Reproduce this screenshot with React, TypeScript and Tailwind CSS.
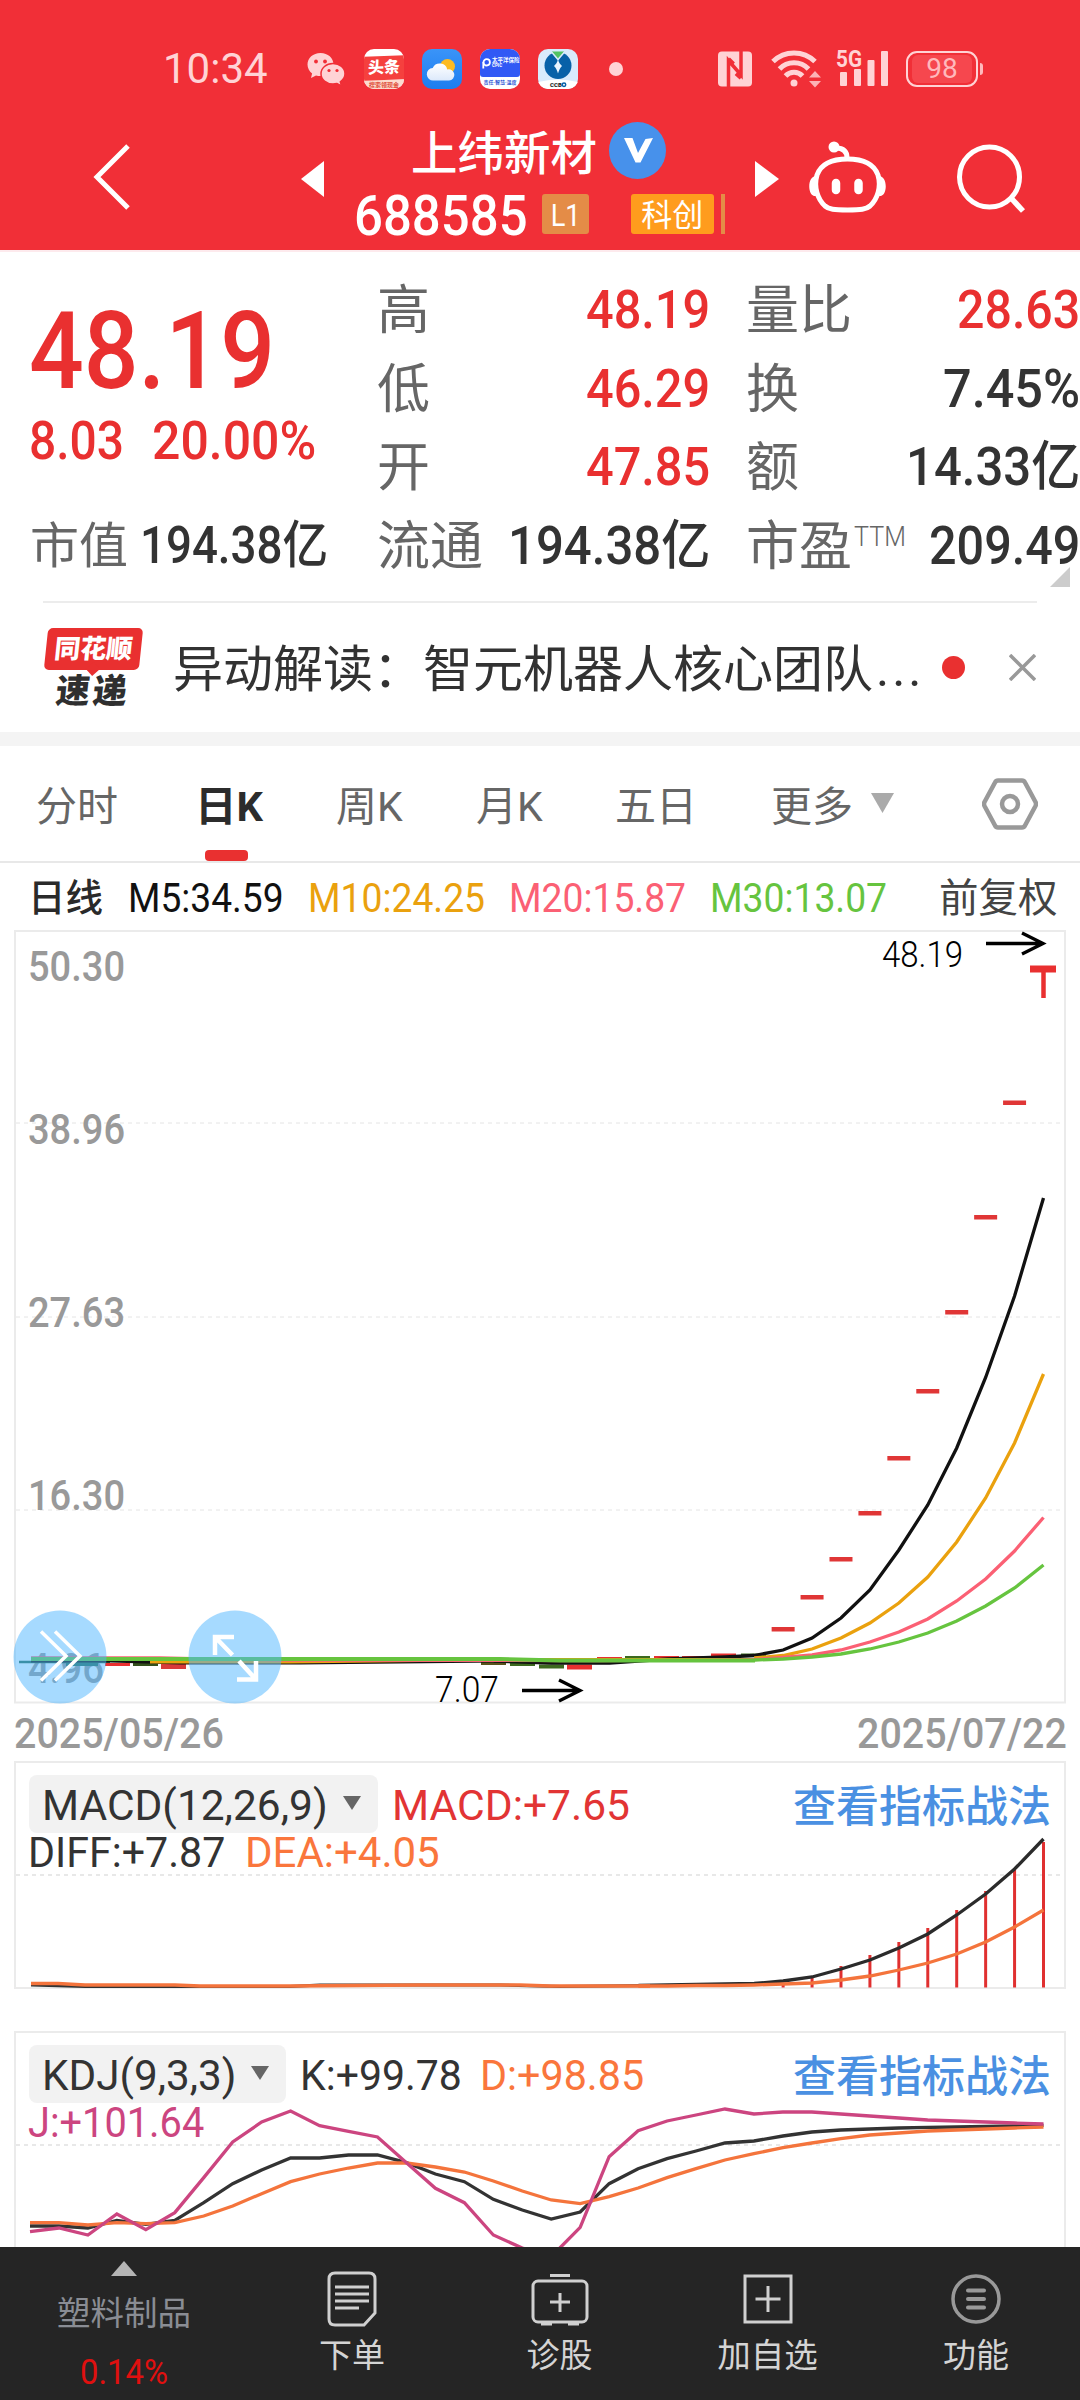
import { useLayoutEffect, useRef, type ReactNode } from "react";

/* Text condensed horizontally so that it fills the width of its box. */
function Fit({ className, children }: { className: string; children: ReactNode }) {
  const outer = useRef<HTMLSpanElement>(null);
  const inner = useRef<HTMLSpanElement>(null);
  useLayoutEffect(() => {
    const o = outer.current;
    const i = inner.current;
    if (o && i && i.offsetWidth > 0) {
      i.style.transform = `scaleX(${o.clientWidth / i.offsetWidth})`;
    }
  });
  return (
    <span ref={outer} className={`block shrink-0 leading-none whitespace-nowrap ${className}`}>
      <span ref={inner} className="inline-block origin-left align-top">
        {children}
      </span>
    </span>
  );
}

const PINK = "#ffd3d5";

function StatusBar() {
  return (
    <div className="flex h-[138px] items-center pl-[163px] text-[#ffd3d5]">
      <Fit className="w-[105px] text-[42px]">10:34</Fit>
      <svg className="ml-[39px] shrink-0" width="38" height="34" viewBox="0 0 38 34" fill={PINK}>
        <path d="M13.5 1C6 1 0.5 6 0.5 12.5c0 3.6 1.8 6.800 4.600 8.900L4 26l5-2.600c1.400.4 3 .6 4.500.6 7.500 0 13-5 13-11.500S21 1 13.500 1z" />
        <path
          d="M26 11.500c-6.800 0-12 4.500-12 10.300S19.200 32 26 32c1.400 0 2.700-.2 4-.5l4.500 2.300-1.200-4c2.800-1.900 4.700-4.800 4.700-8 0-5.800-5.200-10.300-12-10.300z"
          stroke="#f12f37"
          strokeWidth="1.500"
        />
        <g fill="#f12f37">
          <circle cx="9" cy="9.500" r="1.900" />
          <circle cx="18" cy="9.500" r="1.900" />
          <circle cx="22" cy="18.500" r="1.600" />
          <circle cx="30" cy="18.500" r="1.600" />
        </g>
      </svg>
      <div className="ml-[19px] flex h-10 w-10 shrink-0 flex-col overflow-hidden rounded-[10px] bg-white">
        <div className="mt-[7px] flex h-[25px] -skew-y-2 items-center justify-center bg-[#f5403e]">
          <span className="text-[16px] leading-none font-black text-white">头条</span>
        </div>
        <div className="flex h-[9px] items-center justify-center bg-[#fcdccf]">
          <span className="text-[6px] leading-none font-bold whitespace-nowrap text-[#e0503c]">搜索领现金</span>
        </div>
      </div>
      <svg className="ml-[18px] shrink-0 rounded-[10px]" width="40" height="40" viewBox="0 0 40 40">
        <defs>
          <linearGradient id="sky" x1="0" y1="0" x2="0" y2="1">
            <stop offset="0" stopColor="#3a94f8" />
            <stop offset="1" stopColor="#1c7df0" />
          </linearGradient>
          <linearGradient id="cloud" x1="0" y1="0" x2="0" y2="1">
            <stop offset="0" stopColor="#ffffff" />
            <stop offset="1" stopColor="#dce9fb" />
          </linearGradient>
        </defs>
        <rect width="40" height="40" fill="url(#sky)" />
        <circle cx="25.500" cy="17.500" r="7.500" fill="#fdbb21" />
        <path
          d="M11.500 31.500a6.300 6.300 0 0 1-.8-12.600 7.800 7.800 0 0 1 14.600 1.600 5.600 5.600 0 1 1 1.700 11z"
          fill="url(#cloud)"
        />
      </svg>
      <div className="ml-[18px] flex h-10 w-10 shrink-0 flex-col overflow-hidden rounded-[10px] bg-white">
        <div className="flex h-7 items-center gap-px rounded-b-[3px] bg-[#3159f5] pl-[2px] text-white">
          <svg className="shrink-0" width="9" height="11" viewBox="0 0 9 11" fill="none" stroke="white" strokeWidth="1.800">
            <circle cx="4.700" cy="4.300" r="3.200" />
            <path d="M1.300 10.500V4" />
          </svg>
          <div className="flex flex-col gap-px">
            <span className="text-[5.500px] leading-none font-bold whitespace-nowrap">太平洋保险</span>
            <span className="text-[4.500px] leading-none font-bold">CPIC</span>
          </div>
        </div>
        <span className="pt-[3px] text-center text-[5px] leading-none font-bold whitespace-nowrap text-[#3159d5]">
          责任·智慧·温度
        </span>
      </div>
      <svg className="ml-[18px] shrink-0 rounded-[10px]" width="40" height="40" viewBox="0 0 40 40">
        <rect width="40" height="40" fill="#d9ebfc" />
        <circle cx="20" cy="16.500" r="13.500" fill="#0861a8" />
        <path d="M13.500 2.500h13L20 10z" fill="#52c263" />
        <path d="M11 0l9 10.500L29 0" fill="none" stroke="#d9ebfc" strokeWidth="1.500" />
        <path d="M20 10.500c.8 3 2 4.500 4 6.500-2 2-3 4-4 7.500-1-3.500-2-5.500-4-7.500 2-2 3.200-3.500 4-6.500z" fill="#eaf5ff" />
        <path d="M0 33q20-5 40 0v7H0z" fill="white" />
        <text x="12" y="38" fontSize="6" fontWeight="900" fill="#222" fontFamily="Roboto">
          CCB
        </text>
        <circle cx="26" cy="35.700" r="1.700" fill="none" stroke="#0861a8" strokeWidth="1.500" />
      </svg>
      <div className="ml-[31px] h-[14px] w-[14px] shrink-0 rounded-full bg-[#ffd3d5]" />
      <svg className="ml-[95px] shrink-0" width="34" height="36" viewBox="0 0 34 36">
        <rect x="0" y="0.500" width="34" height="35" rx="4" fill={PINK} />
        <path d="M10.500 36V9.500L23 24V0" fill="none" stroke="#f12f37" strokeWidth="3.500" />
        <path d="M10.500 8l5 5M23 27l-5-4.500" fill="none" stroke="#f12f37" strokeWidth="4" />
      </svg>
      <svg className="ml-[19px] shrink-0" width="50" height="40" viewBox="0 0 50 40" fill="none" stroke={PINK} strokeWidth="5">
        <path d="M2 12.500a30 30 0 0 1 42 0" />
        <path d="M8.500 20a20 20 0 0 1 29 0" />
        <path d="M14.500 27a11.500 11.500 0 0 1 17 0" />
        <circle cx="23" cy="34" r="3.500" fill={PINK} stroke="none" />
        <path d="M38 28.500h12l-6-6.500zM38 32h12l-6 6.500z" fill={PINK} stroke="none" opacity=".8" />
      </svg>
      <svg className="ml-[15px] shrink-0 overflow-visible" width="54" height="40" viewBox="0 0 54 40" fill={PINK}>
        <text
          x="0"
          y="18"
          fontSize="24"
          fontWeight="700"
          fontFamily="Roboto"
          textLength="26"
          lengthAdjust="spacingAndGlyphs"
        >
          5G
        </text>
        <rect x="4" y="23" width="7" height="14" rx="1" />
        <rect x="18" y="20" width="7" height="17" rx="1" />
        <rect x="31.500" y="11" width="7" height="26" rx="1" />
        <rect x="45" y="2" width="7" height="35" rx="1" />
      </svg>
      <div className="ml-[16px] flex h-9 w-[72px] shrink-0 items-center justify-center rounded-[11px] border-[2.500px] border-[#ffd3d5]">
        <div className="flex h-[28px] w-[60px] items-center justify-center rounded-[6px] bg-[#f6474e]">
          <span className="text-[28px] leading-none text-[#ffb9bc]">98</span>
        </div>
      </div>
      <div className="ml-[2px] h-3 w-[3px] shrink-0 rounded-r bg-[#ffb9bc]" />
    </div>
  );
}

function Header() {
  return (
    <div className="flex h-[112px] text-white">
      <svg className="mt-[6px] ml-[92px] shrink-0" width="40" height="66" viewBox="0 0 40 66" fill="none">
        <path d="M36 2L5 33l31 31" stroke="white" strokeWidth="5" />
      </svg>
      <svg className="mt-[23px] ml-[169px] shrink-0" width="23" height="36" viewBox="0 0 23 36" fill="white">
        <path d="M23 0v36L0 18z" />
      </svg>
      <div className="ml-[31px] flex w-[370px] shrink-0 flex-col">
        <div className="-mt-[16px] flex h-[56px] items-center pl-[56px]">
          <span className="pt-[9px] text-[46.500px] leading-none font-medium">上纬新材</span>
          <div className="mt-px ml-[12px] flex h-[57px] w-[57px] items-center justify-center rounded-full bg-[#4791eb]">
            <svg width="30" height="25" viewBox="0 0 30 25" fill="white">
              <path d="M1 0h8.500l5.500 15L22.500 1 30 0 17.500 24.500h-5z" />
            </svg>
          </div>
        </div>
        <div className="mt-[16px] flex h-[40px] items-center">
          <Fit className="-ml-px w-[174px] pt-[4px] text-[55px] font-medium">688585</Fit>
          <div className="ml-[14px] flex h-[40px] w-[47px] items-center justify-center rounded-[3px] bg-[#e48c47] text-[32px] leading-none">
            <span className="scale-x-85 pt-px">L1</span>
          </div>
          <div className="ml-[42px] flex h-[40px] w-[84px] items-center justify-center rounded-[3px] bg-[#ff9c1d] pt-[2px] text-[31px] leading-none">
            科创
          </div>
          <div className="ml-[7px] h-[40px] w-[4px] bg-[#e48c47]" />
        </div>
      </div>
      <svg className="mt-[23px] ml-[30px] shrink-0" width="24" height="36" viewBox="0 0 24 36" fill="white">
        <path d="M0 0v36l24-18z" />
      </svg>
      <svg className="mt-[3px] ml-[29px] shrink-0" width="80" height="72" viewBox="0 0 80 72" fill="none" stroke="white">
        <path
          d="M39.500 18C55 18 66 23 70 34c3.500 12-.5 24-8 31-4 3.500-9 4-22.500 4S21 68.500 17 65C9.500 58 5.500 46 9 34 13 23 24 18 39.500 18z"
          strokeWidth="5"
        />
        <path d="M39 17C39 10 35 7 28 7" strokeWidth="5" />
        <circle cx="26" cy="6" r="5.500" fill="white" stroke="none" />
        <path d="M8 35c-9 0-9 21 0 20M71 35c9 0 9 21 0 20" fill="white" stroke="none" />
        <path d="M28 42v7M50.500 42v7" strokeWidth="8.500" strokeLinecap="round" />
      </svg>
      <svg className="mt-[6px] ml-[69px] shrink-0" width="70" height="70" viewBox="0 0 70 70" fill="none" stroke="white">
        <circle cx="32.500" cy="33" r="30" strokeWidth="5" />
        <path d="M54 54l12 13" strokeWidth="5.500" />
      </svg>
    </div>
  );
}

function Quote() {
  return (
    <div className="relative flex h-[351px] border-t-2 border-[#fdeaed] pt-[19px] text-[53px] font-medium text-[#333]">
      <div className="flex w-[377px] shrink-0 flex-col pl-[29px]">
        <Fit className="mt-[27px] w-[246px] text-[107px] text-[#e93030]">48.19</Fit>
        <div className="mt-[10px] flex text-[#e93030]">
          <Fit className="w-[95px] text-[53px]">8.03</Fit>
          <Fit className="ml-[28px] w-[164px] text-[53px]">20.00%</Fit>
        </div>
        <div className="mt-[38px] flex h-[79px] items-center">
          <span className="w-[99px] shrink-0 pt-[2px] pl-px text-[49px] leading-none font-normal whitespace-nowrap text-[#666]">
            市值
          </span>
          <Fit className="ml-[12px] w-[188px] text-[51px]">194.38亿</Fit>
        </div>
      </div>
      <div className="flex w-[333px] shrink-0 flex-col">
        {[
          ["高", "48.19"],
          ["低", "46.29"],
          ["开", "47.85"],
        ].map(([k, v]) => (
          <div key={k} className="flex h-[78.700px] items-center justify-between">
            <span className="pt-[2px] text-[53px] leading-none font-normal text-[#666]">{k}</span>
            <Fit className="w-[124px] text-[#e93030]">{v}</Fit>
          </div>
        ))}
        <div className="flex h-[78.700px] items-center justify-between">
          <span className="pt-[2px] text-[53px] leading-none font-normal text-[#666]">流通</span>
          <Fit className="w-[202px]">194.38亿</Fit>
        </div>
      </div>
      <div className="ml-[36px] flex w-[334px] shrink-0 flex-col">
        <div className="flex h-[78.700px] items-center justify-between">
          <span className="pt-[2px] text-[53px] leading-none font-normal text-[#666]">量比</span>
          <Fit className="w-[123px] text-[#e93030]">28.63</Fit>
        </div>
        <div className="flex h-[78.700px] items-center justify-between">
          <span className="pt-[2px] text-[53px] leading-none font-normal text-[#666]">换</span>
          <Fit className="w-[137px]">7.45%</Fit>
        </div>
        <div className="flex h-[78.700px] items-center justify-between">
          <span className="pt-[2px] text-[53px] leading-none font-normal text-[#666]">额</span>
          <Fit className="w-[174px]">14.33亿</Fit>
        </div>
        <div className="flex h-[78.700px] items-center">
          <span className="pt-[2px] text-[53px] leading-none font-normal text-[#666]">市盈</span>
          <Fit className="mb-[17px] ml-[2px] w-[52px] text-[27px] font-light text-[#666]">TTM</Fit>
          <Fit className="ml-[23px] w-[151px]">209.49</Fit>
        </div>
      </div>
      <svg className="absolute top-[315px] left-[1050px]" width="20" height="20" viewBox="0 0 20 20">
        <path d="M20 0v20H0z" fill="#ccc" />
      </svg>
    </div>
  );
}

function News() {
  return (
    <div className="mx-[43px] flex h-[131px] items-center border-t-2 border-[#ececec]">
      <div className="flex w-[100px] shrink-0 flex-col items-center">
        <div className="relative flex h-[42px] w-[95px] -skew-x-6 items-center justify-center rounded-[5px] bg-[#e93030]">
          <span className="text-[26px] leading-none font-black text-white">同花顺</span>
          <div className="absolute -bottom-[4px] left-[44px] h-[10px] w-[10px] rotate-45 bg-[#e93030]" />
        </div>
        <span className="mt-[4px] -skew-x-6 text-[34px] leading-none font-black tracking-[3px] text-[#2f2f2f]">
          速递
        </span>
      </div>
      <span className="ml-[30px] pt-[5px] text-[50px] leading-none whitespace-nowrap text-[#323232]">
        异动解读：智元机器人核心团队
      </span>
      <span className="ml-[3px] w-[44px] shrink-0 pt-[2px] text-[50px] leading-none tracking-[3px] text-[#323232]">...</span>
      <div className="ml-[22px] h-[23px] w-[23px] shrink-0 rounded-full bg-[#e93030]" />
      <svg className="ml-[44px] shrink-0" width="27" height="27" viewBox="0 0 27 27" stroke="#999" strokeWidth="3.500">
        <path d="M1 1l25 25M26 1L1 26" />
      </svg>
    </div>
  );
}

function Tabs() {
  return (
    <div className="flex h-[117px] border-b-2 border-[#e8e8e8] text-[41px] text-[#666]">
      <div className="flex h-[117px] w-full items-center pl-[36px] leading-none whitespace-nowrap">
        <span className="w-[159px] shrink-0 pt-[5px]">分时</span>
        <div className="relative w-[141px] shrink-0 pt-[5px]">
          <Fit className="w-[68px] font-bold text-[#2c2c2c]">日K</Fit>
          <div className="absolute top-[68px] left-[10px] h-[11px] w-[43px] rounded-[4px] bg-[#e93030]" />
        </div>
        <div className="w-[140px] shrink-0 pt-[5px]">
          <Fit className="w-[67px]">周K</Fit>
        </div>
        <div className="w-[139px] shrink-0 pt-[5px]">
          <Fit className="w-[67px]">月K</Fit>
        </div>
        <span className="w-[156px] shrink-0 pt-[5px]">五日</span>
        <span className="w-[99px] shrink-0 pt-[5px]">更多</span>
        <svg className="-mt-[4px] shrink-0" width="25" height="20" viewBox="0 0 25 20" fill="#aaa">
          <path d="M1 0h23l-11.500 20z" />
        </svg>
        <svg className="-mt-px ml-[87px] shrink-0" width="56" height="52" viewBox="0 0 56 52" fill="none" stroke="#999" strokeWidth="4.500">
          <path d="M16 2.500h24q2 0 3 2L53.500 24q1 2 0 4L43 47.500q-1 2-3 2H16q-2 0-3-2L2.500 28q-1-2 0-4L13 4.500q1-2 3-2z" />
          <circle cx="28" cy="26" r="8" />
        </svg>
      </div>
    </div>
  );
}

function MaRow() {
  return (
    <div className="flex h-[67px] items-center pt-[4px] pl-[28px] text-[40px] leading-none font-[450] whitespace-nowrap">
      <span className="w-[100px] shrink-0 pt-px text-[37.500px] font-medium text-[#2a2a2a]">日线</span>
      <Fit className="w-[156px] text-[#111]">M5:34.59</Fit>
      <Fit className="ml-[24px] w-[177px] text-[#eaa10e]">M10:24.25</Fit>
      <Fit className="ml-[24px] w-[177px] text-[#fb6074]">M20:15.87</Fit>
      <Fit className="ml-[24px] w-[177px] text-[#66c43f]">M30:13.07</Fit>
      <span className="ml-[52px] pt-px text-[39.500px] font-normal text-[#444]">前复权</span>
    </div>
  );
}

type Pt = [number, number];
const toPoints = (pts: Pt[]) => pts.map((p) => p.join(",")).join(" ");

const STEP = 28.93;
const LAST = 1043.5;
/* Series are listed from the newest trading day back. */
const fromLast = (ys: number[]): Pt[] => ys.map((y, i) => [LAST - i * STEP, y]);

const MA5 = fromLast([1198, 1296, 1377.5, 1448, 1505, 1550, 1590, 1618, 1638, 1650, 1655.5, 1657, 1658, 1659, 1661, 1663, 1663, 1663, 1662, 1661]);
const MA10 = fromLast([1374, 1443, 1498, 1542, 1577, 1603, 1623, 1638, 1649, 1655.5, 1658]);
const MA20 = fromLast([1517.500, 1551, 1579, 1601, 1619, 1632, 1642, 1650, 1655, 1657.5, 1659.5]);
const MA30 = fromLast([1565, 1588, 1606, 1621, 1633, 1642, 1649, 1654, 1657, 1659, 1660]);

const LIMIT_UPS = [1102.5, 1217, 1312, 1391, 1458, 1513, 1559, 1597, 1629];

const FLAT: { x: number; y: number; c: string; h?: number }[] = [
  { x: 105, y: 1664, c: "#e93030" },
  { x: 133, y: 1664, c: "#33501c" },
  { x: 161, y: 1665, c: "#d83a3a", h: 5 },
  { x: 481, y: 1663, c: "#58531c" },
  { x: 510, y: 1664, c: "#3c691e" },
  { x: 539, y: 1665.5, c: "#3c691e", h: 4 },
  { x: 567, y: 1665.5, c: "#e93030", h: 5 },
  { x: 597, y: 1658, c: "#e93030" },
  { x: 625, y: 1657, c: "#3c691e" },
  { x: 654, y: 1657, c: "#e93030" },
  { x: 682, y: 1657, c: "#e93030" },
  { x: 711, y: 1654.5, c: "#e93030" },
  { x: 741, y: 1654.5, c: "#3c691e" },
];

const AXIS: [string, number, number][] = [
  ["50.30", 981, 95],
  ["38.96", 1144, 95],
  ["27.63", 1327, 95],
  ["16.30", 1510, 95],
  ["4.96", 1683, 74],
];

function PriceChart() {
  return (
    <svg className="ml-[14px] block overflow-visible" width="1052" height="774" viewBox="14 930 1052 774" fontFamily="Roboto">
      <rect x="15" y="931" width="1050" height="771.500" fill="none" stroke="#ebebeb" strokeWidth="2" />
      {[1123, 1317, 1510].map((y) => (
        <path key={y} d={`M16 ${y}H1064`} stroke="#e4e4e4" strokeDasharray="4 4" />
      ))}
      {AXIS.map(([t, y, w]) => (
        <text key={t} x="28" y={y} fontSize="42" fontWeight="500" fill="#999" textLength={w + 2} lengthAdjust="spacingAndGlyphs">
          {t}
        </text>
      ))}
      <path d="M19 1662H110" stroke="#276b52" strokeWidth="2.500" />
      <path d="M66 1664.500H98" stroke="#276b52" strokeWidth="3" />
      {FLAT.map((c) => (
        <rect key={c.x} x={c.x} y={c.y - 1} width="25" height={c.h ?? 3} fill={c.c} />
      ))}
      {LIMIT_UPS.map((y, i) => (
        <rect key={y} x={LAST - (i + 1) * STEP - 11.5} y={y - 2} width="23" height="4.500" fill="#e03636" />
      ))}
      <path d="M1043.500 969v29" stroke="#e93030" strokeWidth="4.500" />
      <path d="M1030 969h26" stroke="#e93030" strokeWidth="7" />
      <path d="M31 1661H110L180 1663H300L500 1661" fill="none" stroke="#111" strokeWidth="3" />
      <polyline points={toPoints(MA5)} fill="none" stroke="#111" strokeWidth="3.300" />
      <path d="M150 1661.500H290L420 1660H755" fill="none" stroke="#eaa10e" strokeWidth="4" />
      <polyline points={toPoints(MA10)} fill="none" stroke="#eaa10e" strokeWidth="3.300" />
      <path d="M31 1657.500H160L290 1660.500 600 1661 755 1659.500" fill="none" stroke="#fb6074" strokeWidth="2.500" />
      <polyline points={toPoints(MA20)} fill="none" stroke="#fb6074" strokeWidth="3.300" />
      <path d="M31 1659H500L560 1660.500H755" fill="none" stroke="#66c43f" strokeWidth="4" />
      <polyline points={toPoints(MA30)} fill="none" stroke="#66c43f" strokeWidth="3.300" />
      <g fill="#000" fontSize="36" fontWeight="300">
        <text x="882" y="966.500" textLength="81" lengthAdjust="spacingAndGlyphs">
          48.19
        </text>
        <text x="435" y="1701.500" textLength="64" lengthAdjust="spacingAndGlyphs">
          7.07
        </text>
      </g>
      <g fill="none" stroke="#000" strokeWidth="3.300">
        <path d="M986 943.500H1042M1022 933L1043 943.500 1022 954" />
        <path d="M522 1690.500H579M559 1680L580 1690.500 559 1701" />
      </g>
      <g fill="#4db6ff" fillOpacity=".5">
        <circle cx="60" cy="1657" r="46.500" />
        <circle cx="235" cy="1657" r="46.500" />
      </g>
      <g fill="none" stroke="#fff">
        <path d="M41 1631.500L66 1656 41 1680.500M55 1631.500L80 1656 55 1680.500" strokeWidth="3.500" />
        <path d="M215 1655V1637H234M216 1638L232.500 1655M256 1661V1679.500H237M255 1678.500L239 1661" strokeWidth="4.500" />
      </g>
    </svg>
  );
}

function Pill({ className, children }: { className: string; children: ReactNode }) {
  return (
    <div className={`flex h-[58px] shrink-0 items-center rounded-[8px] bg-[#f2f2f2] pl-[13px] text-[#333] ${className}`}>
      {children}
      <svg className="-mt-[2px] ml-[14px] shrink-0" width="20" height="14" viewBox="0 0 20 14" fill="#666">
        <path d="M1 0h18l-9 14z" />
      </svg>
    </div>
  );
}

const MACD_BARS = [1842, 1869, 1891, 1910, 1928, 1942, 1955, 1966, 1978, 1985];
const DIFF = fromLast([1839, 1869, 1894, 1915, 1934, 1948, 1960, 1969, 1977, 1981, 1983.5, 1984, 1984.5, 1985, 1985.5]);
const DEA = fromLast([1910, 1927, 1942, 1954, 1963, 1970, 1976, 1980, 1983, 1984, 1985, 1985.5, 1985.5, 1986, 1986]);

function Macd() {
  return (
    <div className="relative ml-[14px] h-[228px] w-[1052px] border-2 border-[#ebebeb]">
      <svg className="absolute -top-[2px] -left-[2px]" width="1052" height="228" viewBox="14 1761 1052 228" fill="none">
        <path d="M16 1875H1064" stroke="#e8e8e8" strokeWidth="2" strokeDasharray="4 4" />
        {MACD_BARS.map((y, i) => (
          <path key={y} d={`M${LAST - i * STEP} ${y}V1987.500`} stroke="#e03030" strokeWidth="3" />
        ))}
        <path d="M31 1985L85 1986.500H290L320 1985H500L560 1986.500L650 1985.500" stroke="#333" strokeWidth="3" />
        <polyline points={toPoints(DIFF)} stroke="#2b2b2b" strokeWidth="3.300" />
        <path d="M31 1983.500H58L85 1985H175L200 1986H290L420 1985H520L550 1986H650" stroke="#f4743c" strokeWidth="3.500" />
        <polyline points={toPoints(DEA)} stroke="#f4743c" strokeWidth="3.300" />
      </svg>
      <div className="relative mt-[12px] flex h-[58px] items-center pl-[13px] text-[42px] font-[450]">
        <Pill className="w-[349px]">
          <Fit className="w-[286px] pt-[4px]">MACD(12,26,9)</Fit>
        </Pill>
        <Fit className="ml-[14px] w-[238px] pt-[3px] text-[#e23434]">MACD:+7.65</Fit>
        <span className="ml-[163px] pt-[6px] text-[43px] leading-none font-medium whitespace-nowrap text-[#4a90e2]">
          查看指标战法
        </span>
      </div>
      <div className="relative flex h-[36px] items-center pt-[3px] pl-[12px] text-[42px] font-[450]">
        <Fit className="w-[197px] text-[#333]">DIFF:+7.87</Fit>
        <Fit className="ml-[20px] w-[195px] text-[#fa763c]">DEA:+4.05</Fit>
      </div>
    </div>
  );
}

/* Oscillator readings, oldest day first. */
const K = [648, 648, 654, 631, 643, 631, 578, 521, 480, 444, 444, 435, 435, 458, 492, 515, 568, 600, 627, 606, 521, 476, 446, 423, 399, 393, 378, 366, 360, 357, 354, 352, 351, 349, 348, 346];
const D = [638, 638, 645, 638, 641, 638, 618, 588, 551, 515, 492, 474, 459, 459, 471, 486, 513, 543, 570, 581, 560, 534, 503, 476, 450, 431, 413, 399, 386, 375, 369, 363, 360, 357, 354, 351];
const J = [665, 654, 675, 612, 659, 608, 503, 396, 336, 303, 347, 364, 381, 458, 535, 578, 675, 714, 740, 652, 440, 362, 333, 315, 297, 312, 306, 306, 312, 318, 324, 330, 333, 336, 339, 342];
const kdj = (v: number[]): Pt[] => v.map((y, i) => [30 + (i * (LAST - 30)) / 35, 2010 + y / 3]);

function Kdj() {
  return (
    <div className="relative mt-[42px] ml-[14px] h-[216px] w-[1052px] border-2 border-b-0 border-[#ebebeb]">
      <svg className="absolute -top-[2px] -left-[2px]" width="1052" height="216" viewBox="14 2031 1052 216" fill="none">
        <path d="M16 2145H1064" stroke="#e8e8e8" strokeWidth="2" strokeDasharray="4 4" />
        <polyline points={toPoints(kdj(K))} stroke="#333" strokeWidth="3.300" />
        <polyline points={toPoints(kdj(D))} stroke="#f4743c" strokeWidth="3.300" />
        <polyline points={toPoints(kdj(J))} stroke="#cc4580" strokeWidth="3.300" />
      </svg>
      <div className="relative mt-[12px] flex h-[58px] items-center pl-[13px] text-[42px] font-[450]">
        <Pill className="w-[257px]">
          <Fit className="w-[194px] pt-[4px]">KDJ(9,3,3)</Fit>
        </Pill>
        <Fit className="ml-[14px] w-[162px] pt-[3px] text-[#333]">K:+99.78</Fit>
        <Fit className="ml-[18px] w-[164px] pt-[3px] text-[#fa763c]">D:+98.85</Fit>
        <span className="ml-[149px] pt-[6px] text-[43px] leading-none font-medium whitespace-nowrap text-[#4a90e2]">
          查看指标战法
        </span>
      </div>
      <div className="relative flex h-[36px] items-center pt-[3px] pl-[12px] text-[42px] font-[450]">
        <Fit className="w-[176px] text-[#cc4580]">J:+101.64</Fit>
      </div>
    </div>
  );
}

function BottomBar() {
  return (
    <div className="flex h-[153px] bg-[#252525] text-[33px] leading-none text-[#d4d4d4]">
      <div className="flex w-[248px] shrink-0 flex-col items-center pt-[14px]">
        <svg width="26" height="15" viewBox="0 0 26 15" fill="#b5b5b5">
          <path d="M13 0l13 15H0z" />
        </svg>
        <span className="mt-[21px] text-[33.500px] text-[#8a8d94]">塑料制品</span>
        <Fit className="mt-[24px] w-[88px] text-[35px] text-[#e0100f]">0.14%</Fit>
      </div>
      <div className="flex w-[208px] shrink-0 flex-col items-center pt-[24px]">
        <svg width="50" height="56" viewBox="0 0 50 56" fill="none" stroke="#d0d0d0" strokeWidth="3">
          <path d="M8 2h34q6 0 6 6v34L37 54H8q-6 0-6-6V8q0-6 6-6z" />
          <path d="M8 16h34M8 23h34M8 30h34M8 37h24" />
        </svg>
        <span className="mt-[12px]">下单</span>
      </div>
      <div className="flex w-[207px] shrink-0 flex-col items-center pt-[24px]">
        <svg width="60" height="56" viewBox="0 0 60 56" fill="none" stroke="#d0d0d0" strokeWidth="3">
          <rect x="3" y="10" width="54" height="41" rx="5" />
          <path d="M20 4.500h20M30 22v19M20 31h20" />
          <path d="M11 53h11M38 53h11" />
        </svg>
        <span className="mt-[12px]">诊股</span>
      </div>
      <div className="flex w-[209px] shrink-0 flex-col items-center pt-[24px]">
        <svg width="50" height="56" viewBox="0 0 50 56" fill="none" stroke="#d0d0d0" strokeWidth="3">
          <rect x="2" y="5" width="46" height="46" />
          <path d="M25 15v26M12.500 28h25" />
        </svg>
        <span className="mt-[12px] text-[33.500px]">加自选</span>
      </div>
      <div className="flex w-[208px] shrink-0 flex-col items-center pt-[24px]">
        <svg width="50" height="56" viewBox="0 0 50 56" fill="none" stroke="#999" strokeWidth="4">
          <circle cx="25" cy="28" r="23" strokeWidth="3.500" />
          <path d="M17 19.500h16M17 28h16M17 36.500h16" strokeLinecap="round" />
        </svg>
        <span className="mt-[12px]">功能</span>
      </div>
    </div>
  );
}

export default function App() {
  return (
    <div className="h-[2400px] w-[1080px] overflow-hidden bg-white font-['Roboto','Noto_Sans_CJK_SC',sans-serif]">
      <div className="h-[250px] bg-[#f12f37]">
        <StatusBar />
        <Header />
      </div>
      <Quote />
      <News />
      <div className="h-[14px] bg-[#f4f4f4]" />
      <Tabs />
      <MaRow />
      <PriceChart />
      <div className="flex h-[57px] items-center justify-between pt-[2px] pr-[13px] pl-[14px] text-[42px] font-medium text-[#999]">
        <Fit className="w-[210px]">2025/05/26</Fit>
        <Fit className="w-[210px]">2025/07/22</Fit>
      </div>
      <Macd />
      <Kdj />
      <BottomBar />
    </div>
  );
}
